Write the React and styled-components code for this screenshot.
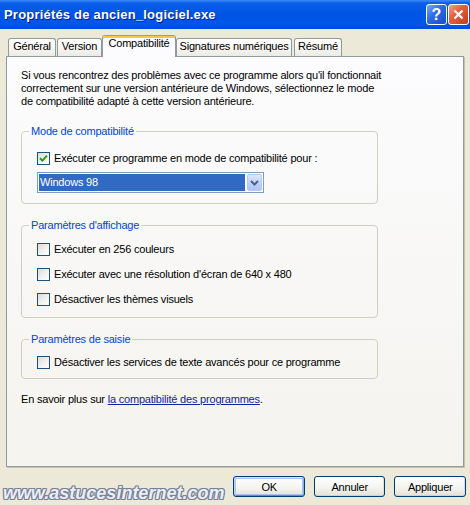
import styled, { createGlobalStyle } from 'styled-components'

const GlobalStyle = createGlobalStyle`
  html, body {
    margin: 0;
    padding: 0;
  }

  body {
    background: #ece9d8;
    font-family: "Liberation Sans", Arial, sans-serif;
    font-size: 11px;
    letter-spacing: -0.2px;
    color: #000;
  }
`

const Window = styled.div`
  width: 470px;
  height: 505px;
  display: flex;
  flex-direction: column;
  background: #ece9d8;
  overflow: hidden;
`

const TitleBar = styled.div`
  height: 29px;
  flex-shrink: 0;
  display: flex;
  align-items: center;
  padding: 0 1px 0 4px;
  background: linear-gradient(
    #3d8cf7 0px,
    #0a5fea 3px,
    #0054e3 45%,
    #0056ea 85%,
    #0048da 100%
  );
`

const Title = styled.div`
  flex: 1;
  color: #fff;
  font-weight: bold;
  font-size: 13px;
  letter-spacing: 0.2px;
  text-shadow: 1px 1px 0 #0a1b8a;
`

const Controls = styled.div`
  display: flex;
  gap: 1px;
`

const CtrlButton = styled.div`
  width: 21px;
  height: 21px;
  box-sizing: border-box;
  border: 1px solid #fff;
  border-radius: 3px;
  display: flex;
  align-items: center;
  justify-content: center;
  color: #fff;
  font-weight: bold;
  font-size: 16px;
  letter-spacing: 0;
  background: ${props => props.$close
    ? 'linear-gradient(135deg, #f2a58a 0%, #e2603f 40%, #c63c18 100%)'
    : 'linear-gradient(135deg, #7aa5f8 0%, #2f68e6 45%, #1a4bd0 100%)'};
`

const TabStrip = styled.div`
  margin-top: 6px;
  height: 21px;
  display: flex;
  align-items: flex-end;
  gap: 2px;
  padding-left: 8px;
`

const Tab = styled.div`
  position: relative;
  z-index: ${props => props.$active ? 2 : 1};
  width: ${props => props.$w}px;
  height: ${props => props.$active ? 22 : 18}px;
  margin: ${props => props.$active ? '0 -2px -1px -2px' : '0'};
  margin-left: ${props => props.$ml ?? (props.$active ? -2 : 0)}px;
  box-sizing: border-box;
  border: 1px solid #919b9c;
  border-bottom: none;
  border-top-color: ${props => props.$active ? '#e68b2c' : '#919b9c'};
  border-radius: 3px 3px 0 0;
  padding-top: 1px;
  text-align: center;
  line-height: 13px;
  white-space: nowrap;
  background: ${props => props.$active
    ? '#fcfcfe'
    : 'linear-gradient(#ffffff, #f6f5f1 55%, #ebeae4)'};
  box-shadow: ${props => props.$active ? 'inset 0 2px 0 #ffc83c' : 'none'};
`

const Panel = styled.div`
  position: relative;
  z-index: 1;
  margin-left: 6px;
  width: 458px;
  height: 411px;
  box-sizing: border-box;
  border: 1px solid #919b9c;
  box-shadow: 1px 1px 0 #c4c2b4;
  background: linear-gradient(#fcfcfe, #f4f3ee);
  padding: 12px 14px 0 14px;
`

const Intro = styled.p`
  margin: 0;
  line-height: 13px;
  white-space: nowrap;
`

const Group = styled.fieldset`
  margin: ${props => props.$mt}px 0 0 0;
  width: 357px;
  box-sizing: border-box;
  border: 1px solid #d0d0bf;
  border-radius: 4px;
  padding: ${props => props.$pt}px 0 ${props => props.$pb}px 15px;
  min-width: 0;
`

const Legend = styled.legend`
  color: #0046d5;
  padding: 0 2px;
  margin-left: -8px;
  line-height: 14px;
`

const Rows = styled.div`
  display: flex;
  flex-direction: column;
  gap: 12px;
`

const Row = styled.div`
  display: flex;
  align-items: center;
  gap: 4px;
  height: 13px;
  line-height: 13px;
  white-space: nowrap;
`

const Box = styled.div`
  width: 13px;
  height: 13px;
  box-sizing: border-box;
  border: 1px solid #1c5180;
  background: linear-gradient(135deg, #dcdcd7 0%, #f4f4f0 60%, #ffffff 100%);
  display: flex;
  align-items: center;
  justify-content: center;
  flex-shrink: 0;
`

const Combo = styled.div`
  margin-top: 7px;
  width: 227px;
  height: 21px;
  box-sizing: border-box;
  border: 1px solid #7f9db9;
  padding: 1px;
  display: flex;
  gap: 2px;
  background: #fff;
`

const ComboValue = styled.div`
  flex: 1;
  background: #316ac5;
  color: #fff;
  line-height: 17px;
  padding-left: 1px;
`

const ComboButton = styled.div`
  width: 15px;
  height: 17px;
  box-sizing: border-box;
  border: 1px solid #b4c8f4;
  border-radius: 2px;
  background: linear-gradient(#dbe6fe, #bccffa 60%, #afc5f6);
  display: flex;
  align-items: center;
  justify-content: center;
`

const More = styled.p`
  margin: 14px 0 0 0;
  line-height: 13px;
`

const Link = styled.a`
  color: #15229c;
  text-decoration: underline;
  cursor: pointer;
`

const Footer = styled.div`
  margin-top: 9px;
  display: flex;
  align-items: flex-start;
  gap: 9px;
  padding: 0 4px 0 3px;
`

const Watermark = styled.div`
  margin-right: auto;
  margin-top: 7px;
  font-weight: bold;
  font-style: italic;
  font-size: 18px;
  line-height: 20px;
  letter-spacing: 0;
  color: #eceef3;
  text-shadow:
    1px 0 0 #77819a,
    -1px 0 0 #77819a,
    0 1px 0 #77819a,
    0 -1px 0 #77819a,
    1px 1px 0 #77819a,
    -1px -1px 0 #77819a,
    1px -1px 0 #77819a,
    -1px 1px 0 #77819a;
`

const Button = styled.button`
  width: 72px;
  height: 21px;
  box-sizing: border-box;
  border: 1px solid #003c74;
  border-radius: 3px;
  padding: 0;
  font: inherit;
  letter-spacing: inherit;
  color: #000;
  background: linear-gradient(#ffffff, #f3f3ee 60%, #e3e0d6);
  box-shadow: ${props => props.$default
    ? 'inset 0 1px 0 #cee7ff, inset 1px 0 0 #bcd4f6, inset -1px 0 0 #89adf4, inset 0 -1px 0 #6982ee, inset 0 0 0 2px #a9c4f6'
    : 'inset 0 -1px 0 #d6d0c5, inset -1px 0 0 #e2ded3'};
`

const Check = () => (
  <svg width="11" height="11" viewBox="0 0 11 11">
    <path d="M2 5.2 L4.4 7.6 L9 2.6" fill="none" stroke="#21a121" strokeWidth="2" />
  </svg>
)

const Chevron = () => (
  <svg width="9" height="6" viewBox="0 0 9 6">
    <path d="M1 1 L4.5 4.5 L8 1" fill="none" stroke="#4d6185" strokeWidth="2" />
  </svg>
)

const CloseX = () => (
  <svg width="11" height="11" viewBox="0 0 11 11">
    <path d="M1.5 1.5 L9.5 9.5 M9.5 1.5 L1.5 9.5" stroke="#fff" strokeWidth="2.2" />
  </svg>
)

const tabs = [
  { label: 'Général', w: 48 },
  { label: 'Version', w: 45, ml: -1 },
  { label: 'Compatibilité', w: 74, active: true },
  { label: 'Signatures numériques', w: 116 },
  { label: 'Résumé', w: 48 }
]

const CheckRow = ({ checked, children }) => (
  <Row>
    <Box>{checked && <Check />}</Box>
    {children}
  </Row>
)

const App = () => {
  return (
    <Window>
      <GlobalStyle />
      <TitleBar>
        <Title>Propriétés de ancien_logiciel.exe</Title>
        <Controls>
          <CtrlButton>?</CtrlButton>
          <CtrlButton $close><CloseX /></CtrlButton>
        </Controls>
      </TitleBar>

      <TabStrip>
        {tabs.map(t => (
          <Tab key={t.label} $w={t.w} $ml={t.ml} $active={t.active}>
            {t.label}
          </Tab>
        ))}
      </TabStrip>

      <Panel>
        <Intro>
          Si vous rencontrez des problèmes avec ce programme alors qu'il fonctionnait<br />
          correctement sur une version antérieure de Windows, sélectionnez le mode<br />
          de compatibilité adapté à cette version antérieure.
        </Intro>

        <Group $mt={16} $pt={14} $pb={10}>
          <Legend>Mode de compatibilité</Legend>
          <CheckRow checked>Exécuter ce programme en mode de compatibilité pour :</CheckRow>
          <Combo>
            <ComboValue>Windows 98</ComboValue>
            <ComboButton><Chevron /></ComboButton>
          </Combo>
        </Group>

        <Group $mt={14} $pt={11} $pb={11}>
          <Legend>Paramètres d'affichage</Legend>
          <Rows>
            <CheckRow>Exécuter en 256 couleurs</CheckRow>
            <CheckRow>Exécuter avec une résolution d'écran de 640 x 480</CheckRow>
            <CheckRow>Désactiver les thèmes visuels</CheckRow>
          </Rows>
        </Group>

        <Group $mt={14} $pt={10} $pb={9}>
          <Legend>Paramètres de saisie</Legend>
          <CheckRow>Désactiver les services de texte avancés pour ce programme</CheckRow>
        </Group>

        <More>
          En savoir plus sur <Link>la compatibilité des programmes</Link>.
        </More>
      </Panel>

      <Footer>
        <Watermark>www.astucesinternet.com</Watermark>
        <Button $default>OK</Button>
        <Button>Annuler</Button>
        <Button>Appliquer</Button>
      </Footer>
    </Window>
  )
}

export default App
